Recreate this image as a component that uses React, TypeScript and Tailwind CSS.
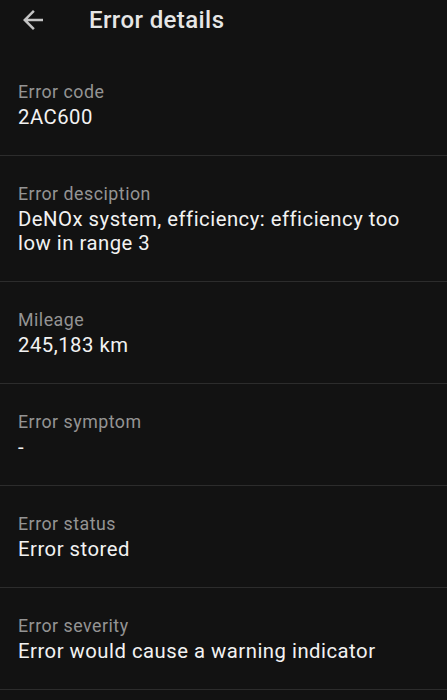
import { ReactNode } from "react";

const items: { label: string; value: ReactNode }[] = [
  { label: "Error code", value: "2AC600" },
  { label: "Error desciption", value: "DeNOx system, efficiency: efficiency too low in range 3" },
  { label: "Mileage", value: "245,183 km" },
  { label: "Error symptom", value: "-" },
  { label: "Error status", value: "Error stored" },
  { label: "Error severity", value: "Error would cause a warning indicator" },
];

function BackArrow() {
  return (
    <svg width="30" height="30" viewBox="0 0 24 24" className="shrink-0">
      <path
        d="M20 11H7.83l5.59-5.59L12 4l-8 8 8 8 1.41-1.41L7.83 13H20v-2z"
        fill="#c4c4c4"
      />
    </svg>
  );
}

export default function App() {
  return (
    <div className="w-[447px] h-[700px] overflow-hidden bg-[#121212] font-['Roboto',sans-serif]">
      <div className="flex items-center h-[39px] pl-[18px]">
        <BackArrow />
        <h1 className="ml-[41px] text-[24px] leading-8 font-medium text-[#e6e6e6] tracking-[0.4px]">Error details</h1>
      </div>
      <div className="pt-[15px]">
        {items.map((it) => (
          <div key={it.label} className="pl-[18px] pr-[30px] pt-[26px] pb-[26px] border-b border-[#2c2c2c]">
            <div className="text-[17.8px] leading-6 text-[#949494] tracking-[0.5px]">{it.label}</div>
            <div className="mt-px text-[20.3px] leading-6 text-[#f2f2f2] tracking-[0.5px]">{it.value}</div>
          </div>
        ))}
      </div>
    </div>
  );
}
